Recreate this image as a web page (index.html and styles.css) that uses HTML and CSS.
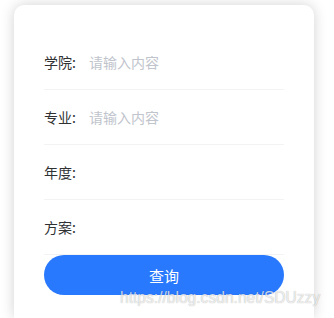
FILE: index.html
```html
<!DOCTYPE html>
<html lang="zh">
<head>
<meta charset="utf-8">
<link rel="stylesheet" href="styles.css">
</head>
<body>
<div class="card">
  <div class="row"><span class="label">学院:</span><span class="placeholder">请输入内容</span></div>
  <div class="row"><span class="label">专业:</span><span class="placeholder">请输入内容</span></div>
  <div class="row"><span class="label">年度:</span></div>
  <div class="row"><span class="label">方案:</span></div>
  <button class="btn">查询</button>
</div>
<div class="watermark">https://blog.csdn.net/SDUzzy</div>
</body>
</html>
```
FILE: styles.css
```css
html, body {
  margin: 0;
  padding: 0;
  background: #ffffff;
  overflow: hidden;
  height: 318px;
}
body {
  font-family: "Noto Sans CJK SC", "Noto Sans", sans-serif;
  padding: 5px 20px 0 14px;
  box-sizing: border-box;
}
.card {
  width: 300px;
  height: 313px;
  box-sizing: border-box;
  background: #fff;
  border-radius: 10px 10px 0 0;
  box-shadow: 0 0 14px rgba(0, 0, 0, 0.18);
  padding: 30px 30px 0 30px;
}
.row {
  height: 54px;
  border-bottom: 1px solid #f3f3f3;
  display: flex;
  align-items: center;
  font-size: 14px;
}
.label {
  width: 45px;
  color: #303133;
  flex: none;
}
.placeholder {
  color: #c0c4cc;
}
.btn {
  display: block;
  width: 240px;
  height: 40px;
  border: none;
  border-radius: 20px;
  background: #2979ff;
  color: #fff;
  font-family: "Noto Sans CJK SC", sans-serif;
  font-size: 15px;
  padding: 0;
}
.watermark {
  position: absolute;
  left: 120px;
  top: 287px;
  font-family: "Liberation Sans", Arial, sans-serif;
  font-size: 15.6px;
  line-height: 21px;
  white-space: nowrap;
  color: rgba(255, 255, 255, 0.75);
  text-shadow: 0 0 1px rgba(0, 0, 0, 0.35);
}
```
